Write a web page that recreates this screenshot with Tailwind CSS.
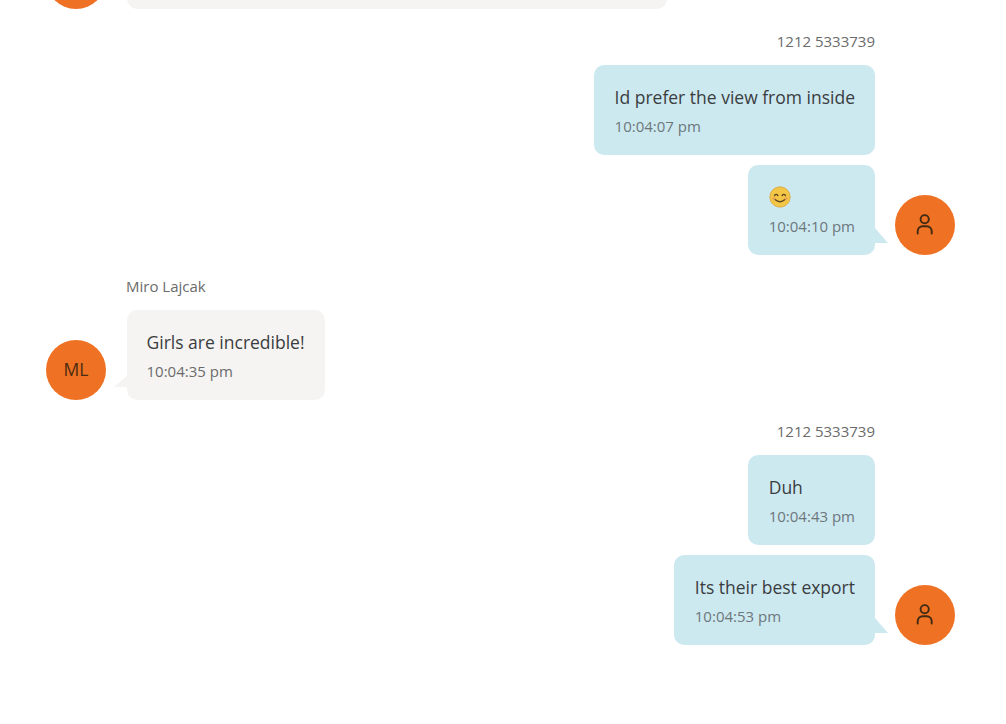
<!DOCTYPE html>
<html lang="en">
<head>
  <meta charset="UTF-8" />
  <title>Chat</title>
  <script src="https://cdn.jsdelivr.net/npm/@tailwindcss/browser@4"></script>
</head>
<body class="bg-white overflow-hidden h-[724px] font-['Open_Sans',sans-serif] text-[#3a3d40]">
  <div class="pl-[46px] pr-[51px] -mt-[51px] flex flex-col">

    <!-- previous message, cut off by the scroll -->
    <div class="flex items-end gap-[20.5px] h-[60px]">
      <div class="w-[60px] h-[60px] rounded-full bg-[#ef7123]"></div>
      <div class="w-[540px] h-[60px] rounded-[10px] bg-[#f5f4f2]"></div>
    </div>

    <!-- 1212 5333739 -->
    <div class="mt-[22px] pr-[80px] text-right text-[15px] leading-5 text-[#6b6b6b]">1212 5333739</div>
    <div class="mt-[14px] flex flex-col items-end gap-[10.5px]">
      <div class="mr-[80px] h-[89.5px] rounded-[10px] bg-[#cde9f0] pl-[20.5px] pr-5 pt-[20px]">
        <div class="text-[17.5px] leading-6">Id prefer the view from inside</div>
        <div class="mt-[7px] text-[15px] leading-5 text-[#6c777c]">10:04:07 pm</div>
      </div>
      <div class="flex items-end gap-[20px]">
        <div class="relative h-[89.5px] rounded-[10px] bg-[#cde9f0] pl-[20.5px] pr-5 pt-[20px]">
          <div class="h-6 flex items-center">
            <svg width="22" height="22" viewBox="0 0 22 22">
              <circle cx="11" cy="11" r="10.2" fill="#f4c646" stroke="#d6a53c" stroke-width="0.8" />
              <path d="M5.5 9.5q1.7-2.2 3.4 0M13.1 9.5q1.7-2.2 3.4 0" fill="none" stroke="#5c4520" stroke-width="1.3" stroke-linecap="round" />
              <path d="M6 13.5q5 4.5 10 0" fill="none" stroke="#5c4520" stroke-width="1.4" stroke-linecap="round" />
              <circle cx="4.8" cy="12.5" r="1.8" fill="#ee9a55" opacity="0.6" />
              <circle cx="17.2" cy="12.5" r="1.8" fill="#ee9a55" opacity="0.6" />
            </svg>
          </div>
          <div class="mt-[7px] text-[15px] leading-5 text-[#6c777c]">10:04:10 pm</div>
          <svg class="absolute left-full bottom-[12px]" width="13" height="15" viewBox="0 0 13 15"><path d="M0 0L13 15H0Z" fill="#cde9f0" /></svg>
        </div>
        <div class="w-[60px] h-[60px] rounded-full bg-[#ef7123] flex items-center justify-center">
          <svg width="20" height="24" viewBox="0 0 20 24" fill="none" stroke="#3f2a14" stroke-width="1.9" stroke-linecap="round">
            <circle cx="9.7" cy="6.2" r="4.1" />
            <path d="M2.7 20.5v-2.3a5 5 0 0 1 5-5h4a5 5 0 0 1 5 5v2.3" />
          </svg>
        </div>
      </div>
    </div>

    <!-- Miro Lajcak -->
    <div class="mt-[21.5px] pl-[80px] text-[15px] leading-5 text-[#6b6b6b]">Miro Lajcak</div>
    <div class="mt-[14px] flex items-end gap-[20.5px]">
      <div class="w-[60px] h-[60px] rounded-full bg-[#ef7123] flex items-center justify-center text-[17.5px] text-[#4a2c12]">ML</div>
      <div class="relative h-[89.5px] rounded-[10px] bg-[#f5f4f2] px-5 pt-[20px]">
        <div class="text-[17.5px] leading-6">Girls are incredible!</div>
        <div class="mt-[7px] text-[15px] leading-5 text-[#6b6b6b]">10:04:35 pm</div>
        <svg class="absolute right-full bottom-[13px]" width="13" height="11" viewBox="0 0 13 11"><path d="M13 0L0 11H13Z" fill="#f5f4f2" /></svg>
      </div>
    </div>

    <!-- 1212 5333739 -->
    <div class="mt-[21.5px] pr-[80px] text-right text-[15px] leading-5 text-[#6b6b6b]">1212 5333739</div>
    <div class="mt-[14px] flex flex-col items-end gap-[10.5px]">
      <div class="mr-[80px] h-[89.5px] rounded-[10px] bg-[#cde9f0] pl-[20.5px] pr-5 pt-[20px]">
        <div class="text-[17.5px] leading-6">Duh</div>
        <div class="mt-[7px] text-[15px] leading-5 text-[#6c777c]">10:04:43 pm</div>
      </div>
      <div class="flex items-end gap-[20px]">
        <div class="relative h-[89.5px] rounded-[10px] bg-[#cde9f0] pl-[20.5px] pr-5 pt-[20px]">
          <div class="text-[17.5px] leading-6">Its their best export</div>
          <div class="mt-[7px] text-[15px] leading-5 text-[#6c777c]">10:04:53 pm</div>
          <svg class="absolute left-full bottom-[12px]" width="13" height="15" viewBox="0 0 13 15"><path d="M0 0L13 15H0Z" fill="#cde9f0" /></svg>
        </div>
        <div class="w-[60px] h-[60px] rounded-full bg-[#ef7123] flex items-center justify-center">
          <svg width="20" height="24" viewBox="0 0 20 24" fill="none" stroke="#3f2a14" stroke-width="1.9" stroke-linecap="round">
            <circle cx="9.7" cy="6.2" r="4.1" />
            <path d="M2.7 20.5v-2.3a5 5 0 0 1 5-5h4a5 5 0 0 1 5 5v2.3" />
          </svg>
        </div>
      </div>
    </div>

  </div>
</body>
</html>
